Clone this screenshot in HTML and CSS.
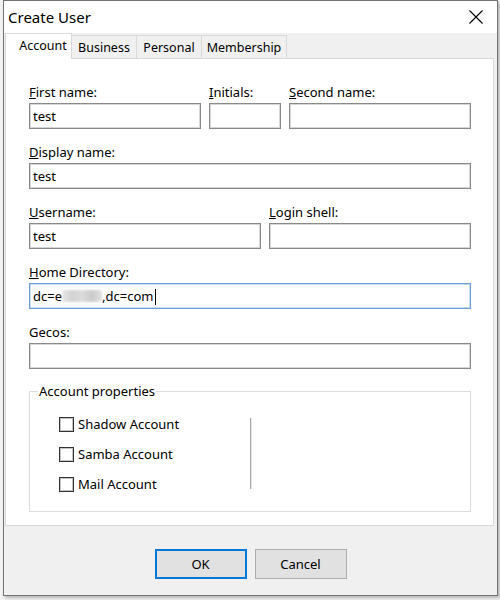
FILE: index.html
```html
<!DOCTYPE html>
<html lang="en">
<head>
<meta charset="utf-8">
<title>Create User</title>
<link rel="stylesheet" href="styles.css">
</head>
<body>
<div class="window">
  <div class="titlebar">
    <span class="title">Create User</span>
    <svg class="close" viewBox="0 0 14 14" aria-hidden="true"><path d="M0.5 0.5 L13.5 13.5 M13.5 0.5 L0.5 13.5" stroke="#000" stroke-width="1.1" fill="none"/></svg>
  </div>
  <div class="tabs">
    <div class="tab active t1">Account</div>
    <div class="tab t2">Business</div>
    <div class="tab t3">Personal</div>
    <div class="tab t4">Membership</div>
  </div>
  <div class="panel">
    <div class="rows">
      <div class="row r3">
        <div class="cell"><label><u>F</u>irst name:</label><div class="field">test</div></div>
        <div class="cell"><label><u>I</u>nitials:</label><div class="field"></div></div>
        <div class="cell"><label><u>S</u>econd name:</label><div class="field"></div></div>
      </div>
      <div class="row r1">
        <div class="cell"><label><u>D</u>isplay name:</label><div class="field">test</div></div>
      </div>
      <div class="row r2">
        <div class="cell"><label><u>U</u>sername:</label><div class="field">test</div></div>
        <div class="cell"><label><u>L</u>ogin shell:</label><div class="field"></div></div>
      </div>
      <div class="row r1">
        <div class="cell"><label><u>H</u>ome Directory:</label><div class="field focus">dc=e<span class="blur"></span>,dc=com<span class="caret"></span></div></div>
      </div>
      <div class="row r1">
        <div class="cell"><label>Gecos:</label><div class="field"></div></div>
      </div>
    </div>
    <fieldset class="group">
      <legend>Account properties</legend>
      <div class="group-body">
        <div class="checks">
          <div class="check"><span class="box"></span><span>Shadow Account</span></div>
          <div class="check"><span class="box"></span><span>Samba Account</span></div>
          <div class="check"><span class="box"></span><span>Mail Account</span></div>
        </div>
        <div class="divider"></div>
      </div>
    </fieldset>
  </div>
  <div class="footer">
    <button class="btn default">OK</button>
    <button class="btn">Cancel</button>
  </div>
</div>
</body>
</html>
```
FILE: styles.css
```css
html, body {
  margin: 0;
  padding: 0;
}
body {
  width: 500px;
  height: 600px;
  overflow: hidden;
  background: #f2f2f2;
  font-family: "Noto Sans", "Open Sans", sans-serif;
  font-size: 13px;
  color: #000;
}
.window {
  box-sizing: border-box;
  width: 495px;
  height: 596px;
  margin-left: 3px;
  border: 1px solid #747474;
  background: #f0f0f0;
  display: flex;
  flex-direction: column;
  box-shadow: 2px 2px 3px rgba(0, 0, 0, 0.25);
}
.titlebar {
  flex: none;
  height: 32px;
  background: #fff;
  display: flex;
  align-items: center;
  justify-content: space-between;
  padding: 0 14px 0 4px;
}
.title {
  font-size: 15px;
}
.close {
  width: 14px;
  height: 14px;
  display: block;
}
.tabs {
  flex: none;
  height: 25px;
  display: flex;
  align-items: flex-end;
  padding-left: 1px;
}
.tab {
  box-sizing: border-box;
  height: 23px;
  border: 1px solid #d9d9d9;
  border-left: none;
  border-bottom: none;
  background: #f0f0f0;
  font-size: 12.5px;
  line-height: 16px;
  display: flex;
  align-items: center;
  justify-content: center;
  padding-top: 1px;
}
.tab.active {
  height: 26px;
  margin-bottom: -1px;
  background: #fff;
  border-left: 1px solid #d9d9d9;
  position: relative;
  z-index: 1;
  padding: 0 0 2px 9px;
}
.t1 { width: 67px; }
.t2 { width: 65px; }
.t3 { width: 65px; }
.t4 { width: 85px; }
.panel {
  flex: none;
  box-sizing: border-box;
  margin: 0 3px 0 1px;
  background: #fff;
  border: 1px solid #d9d9d9;
  padding: 25px 22px 13px 23px;
}
.rows {
  display: flex;
  flex-direction: column;
  gap: 15px;
}
.row {
  display: grid;
  column-gap: 8px;
}
.r3 { grid-template-columns: 172px 72px 1fr; }
.r2 { grid-template-columns: 232px 1fr; }
.r1 { grid-template-columns: 1fr; }
.cell {
  display: flex;
  flex-direction: column;
  gap: 3px;
  min-width: 0;
}
label {
  display: block;
  height: 16px;
  line-height: 16px;
  white-space: nowrap;
}
.field {
  box-sizing: border-box;
  height: 26px;
  border: 1px solid #8a8a8a;
  box-shadow: inset 0 0 0 1px #d6d6d6;
  padding: 0 3px;
  line-height: 24px;
  white-space: nowrap;
  overflow: hidden;
  background: #fff;
}
.field.focus {
  border-color: #6a9dd0;
  box-shadow: inset 0 0 0 1px #c8dcef;
}
.blur {
  display: inline-block;
  width: 40px;
  height: 12px;
  vertical-align: -1px;
  border-radius: 3px;
  background: linear-gradient(90deg, #e8e8e8, #d2d2d2 25%, #dcdcdc 50%, #cacaca 75%, #e2e2e2);
  filter: blur(1.2px);
}
.caret {
  display: inline-block;
  width: 1px;
  height: 16px;
  margin-left: 2px;
  background: #000;
  vertical-align: -4px;
}
.group {
  margin: 14px 0 0;
  padding: 0;
  border: 1px solid #dcdcdc;
  min-width: 0;
}
.group legend {
  padding: 0 1px;
  margin-left: 8px;
  line-height: 16px;
}
.group-body {
  display: flex;
  padding: 10px 0 12px 29px;
}
.checks {
  width: 191px;
  display: flex;
  flex-direction: column;
}
.check {
  height: 30px;
  display: flex;
  align-items: center;
  gap: 4px;
}
.box {
  box-sizing: border-box;
  width: 15px;
  height: 15px;
  border: 1px solid #333;
  box-shadow: inset 0 0 0 1px #c4c4c4;
  background: #fff;
  flex: none;
}
.divider {
  width: 1px;
  margin: 9px 0 10px;
  background: #a9a9a9;
  border-right: 1px solid #e4e4e4;
}
.footer {
  flex: 1;
  display: flex;
  justify-content: center;
  align-items: flex-start;
  gap: 8px;
  padding-top: 23px;
}
.btn {
  box-sizing: border-box;
  width: 92px;
  height: 30px;
  padding: 0;
  background: #e1e1e1;
  border: 1px solid #adadad;
  font-family: inherit;
  font-size: 13px;
  color: #000;
}
.btn.default {
  border: 2px solid #0078d7;
}
```
